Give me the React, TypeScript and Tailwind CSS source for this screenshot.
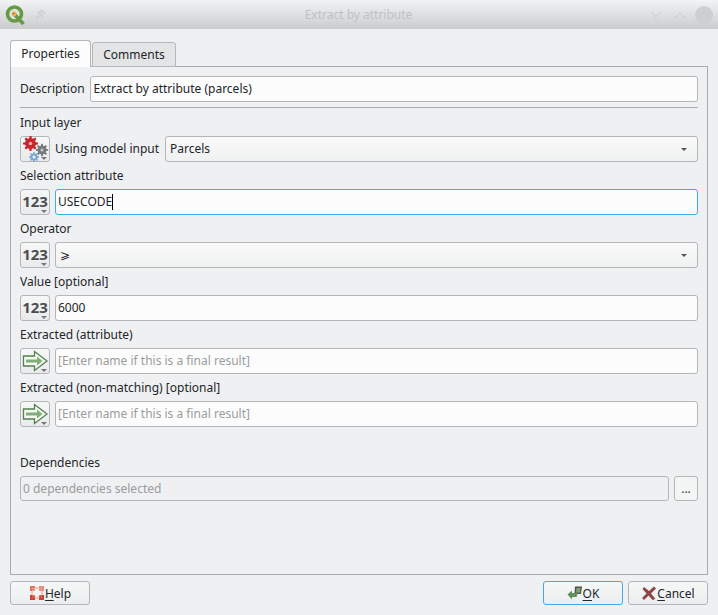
import React from 'react';

const font = "font-['Noto_Sans',sans-serif]";

const DropMark = () => (
  <span className="absolute right-[2px] bottom-[1px] w-0 h-0 border-x-[3px] border-x-transparent border-t-[3px] border-t-[#777]" />
);

const NumberIcon = () => (
  <span className="-mt-[2px] text-[15px] font-bold text-[#4d4d4d] leading-none lining-nums">123</span>
);

const ArrowIcon = () => (
  <svg width="28" height="22" viewBox="0 0 28 22">
    <path d="M2.5 6H13.5V1.5L26 11L13.5 20.5V16H2.5Z" fill="#f6f8f2" stroke="#54804f" strokeWidth="1.3" />
    <path d="M5 9.5H16V6.5L21.5 11L16 15.5V12.5H5Z" fill="#7fae78" />
  </svg>
);

// square-ish teeth, four points per tooth
const gearPath = (cx: number, cy: number, r: number, teeth: number) => {
  let d = '';
  const step = (Math.PI * 2) / teeth;
  for (let i = 0; i < teeth; i++) {
    const a = i * step;
    const pts: [number, number][] = [
      [r * 0.72, a - step * 0.32],
      [r, a - step * 0.16],
      [r, a + step * 0.16],
      [r * 0.72, a + step * 0.32],
    ];
    pts.forEach(([rad, t], j) => {
      d += `${i === 0 && j === 0 ? 'M' : 'L'}${(cx + rad * Math.cos(t)).toFixed(2)} ${(cy + rad * Math.sin(t)).toFixed(2)}`;
    });
  }
  return d + 'Z';
};

const ModelIcon = () => (
  <svg width="28" height="26" viewBox="0 0 28 26">
    <path d={gearPath(9.5, 7.5, 7.5, 8)} fill="#c9252d" />
    <circle cx="9.5" cy="7.5" r="1.8" fill="#e9a9a9" />
    <path d={gearPath(21, 14, 6.2, 8)} fill="#74797c" />
    <circle cx="21" cy="14" r="1.5" fill="#c9cbcc" />
    <path d={gearPath(13, 21, 5, 8)} fill="#7aa7d2" />
    <circle cx="13" cy="21" r="1.5" fill="#eef4fa" />
  </svg>
);

const QgisLogo = () => (
  <svg width="22" height="24" viewBox="0 0 22 24">
    <circle cx="10.5" cy="11" r="7" fill="#dfe3d8" stroke="#659a48" strokeWidth="3.6" />
    <path d="M11 12L19.5 21" stroke="#659a48" strokeWidth="3.6" />
    <circle cx="10" cy="11" r="2.4" fill="#e6b451" />
    <circle cx="9.5" cy="10.5" r="1.1" fill="#d8654f" />
  </svg>
);

const ToolButton = ({ children }: { children: React.ReactNode }) => (
  <div className="relative w-[30px] h-[26px] shrink-0 flex items-center justify-center rounded-[3px] border border-[#b4b6b8] bg-gradient-to-b from-[#f6f7f7] to-[#e9eaeb]">
    {children}
    <DropMark />
  </div>
);

const TextBox = ({ value, placeholder, focused, pad = 'px-[2px]' }: { value?: string; placeholder?: string; focused?: boolean; pad?: string }) => (
  <div
    className={`flex-1 h-[26px] flex items-center rounded-[3px] border bg-[#fcfcfc] ${pad} ${
      focused ? 'border-[#3daee9]' : 'border-[#b4b6b8]'
    }`}
  >
    {value !== undefined && <span className="text-[#232629]">{value}</span>}
    {focused && <span className="w-px h-[16px] bg-black" />}
    {placeholder && <span className="text-[#9a9c9e]">{placeholder}</span>}
  </div>
);

const SelectBox = ({ value, className }: { value: string; className: string }) => (
  <div className={`h-[26px] pl-[4px] pr-[10px] flex items-center justify-between rounded-[3px] border border-[#b4b6b8] bg-gradient-to-b from-[#f9f9f9] to-[#f0f1f1] ${className}`}>
    <span className="text-[#232629]">{value}</span>
    <span className="w-0 h-0 border-x-[3px] border-x-transparent border-t-[3px] border-t-[#555]" />
  </div>
);

const Field = ({ label, children }: { label: string; children: React.ReactNode }) => (
  <div className="flex flex-col">
    <div className="h-[27px] flex items-center text-[#232629]">{label}</div>
    <div className="flex items-center gap-[5px]">{children}</div>
  </div>
);

const HelpIcon = () => (
  <svg width="16" height="16" viewBox="0 0 16 16">
    <rect x="3" y="3" width="10" height="10" fill="none" stroke="#efc9bf" strokeWidth="2" />
    <path d="M1 6V1H6V3H3V6Z" fill="#e0766a" />
    <path d="M10 1H15V6H13V3H10Z" fill="#e8907f" />
    <path d="M1 10H3V13H6V15H1Z" fill="#cf4238" />
    <path d="M13 10H15V15H10V13H13Z" fill="#cf4238" />
    <circle cx="4.5" cy="4.5" r="1.6" fill="#e58a7c" />
    <circle cx="11.5" cy="4.5" r="1.6" fill="#e58a7c" />
    <circle cx="4.5" cy="11.5" r="1.6" fill="#d5483d" />
    <circle cx="11.5" cy="11.5" r="1.6" fill="#d5483d" />
  </svg>
);

const OkIcon = () => (
  <svg width="16" height="16" viewBox="0 0 16 16">
    <path d="M8 1.5H15L14 9H7.5Z" fill="#4c5a4c" />
    <path d="M9.5 3H13.5L13 7.5H9Z" fill="#7da276" />
    <path d="M0.5 9.5L5 5.5V8H11L9.5 12H5V14.5Z" fill="#5f9059" />
  </svg>
);

const CancelIcon = () => (
  <svg width="16" height="16" viewBox="0 0 16 16">
    <path d="M3 2L8 6L13 1.5L15 3.5L10 8.5L14.5 14L11.5 15L7.5 10.5L3 15L1 13L5.5 8.5L1.5 4Z" fill="#8c4744" />
  </svg>
);

const FooterButton = ({ icon, mnemonic, rest, focused }: { icon: React.ReactNode; mnemonic: string; rest: string; focused?: boolean }) => (
  <div
    className={`w-[80px] h-[24px] flex items-center justify-center rounded-[3px] border bg-gradient-to-b from-[#f6f7f7] to-[#ecedee] text-[#232629] ${
      focused ? 'border-[#3daee9]' : 'border-[#b4b6b8]'
    }`}
  >
    {icon}
    <span className="mt-px underline underline-offset-2">{mnemonic}</span>
    <span className="mt-px">{rest}</span>
  </div>
);

export default function App() {
  return (
    <div className={`w-[718px] h-[615px] flex flex-col bg-[#eff0f1] text-[12px] overflow-hidden ${font}`}>
      {/* title bar */}
      <div className="h-[29px] shrink-0 pl-[4px] pr-[5px] flex items-center bg-gradient-to-b from-[#f1f3f5] to-[#cbcccd]">
        <QgisLogo />
        <svg width="14" height="14" viewBox="0 0 14 14" className="ml-[7px]">
          <path d="M3 11L6 7.5M5 4L10 9M8 2L12 6M6 5L9 2.5" stroke="#cfd1d3" strokeWidth="2" fill="none" />
        </svg>
        <div className="flex-1 text-center text-[#bfc1c3] pl-[20px]">Extract by attribute</div>
        <svg width="12" height="8" viewBox="0 0 12 8" className="mr-[12px]">
          <path d="M1 1L6 6L11 1" stroke="#c6c8ca" fill="none" />
        </svg>
        <svg width="12" height="8" viewBox="0 0 12 8" className="mr-[9px]">
          <path d="M1 7L6 2L11 7" stroke="#c6c8ca" fill="none" />
        </svg>
        <div className="w-[18px] h-[18px] rounded-full bg-[#cdd0d2]" />
      </div>

      <div className="flex-1 px-[10px] pt-[11px] flex flex-col">
        {/* tabs */}
        <div className="flex items-end h-[27px] relative z-10 -mb-px">
          <div className="w-[81px] h-[27px] flex items-center justify-center rounded-t-[3px] border border-b-0 border-[#b4b6b8] bg-[#fcfcfc] text-[#232629]">
            Properties
          </div>
          <div className="w-[84px] h-[25px] ml-px flex items-center justify-center rounded-t-[3px] border border-[#b4b6b8] bg-[#e3e4e5] text-[#232629]">
            Comments
          </div>
        </div>

        {/* panel */}
        <div className="h-[509px] border border-[#a9abad] px-[9px] pt-[9px] flex flex-col">
          <div className="flex items-center gap-[5px]">
            <span className="text-[#232629]">Description</span>
            <TextBox value="Extract by attribute (parcels)" pad="px-[3px]" />
          </div>
          <div className="h-px bg-[#a9abad] mt-[5px] mb-[1px]" />

          <Field label="Input layer">
            <ToolButton>
              <ModelIcon />
            </ToolButton>
            <span className="text-[#232629]">Using model input</span>
            <SelectBox value="Parcels" className="flex-1 ml-px" />
          </Field>
          <Field label="Selection attribute">
            <ToolButton>
              <NumberIcon />
            </ToolButton>
            <TextBox value="USECODE" focused />
          </Field>
          <Field label="Operator">
            <ToolButton>
              <NumberIcon />
            </ToolButton>
            <SelectBox value="⩾" className="flex-1" />
          </Field>
          <Field label="Value [optional]">
            <ToolButton>
              <NumberIcon />
            </ToolButton>
            <TextBox value="6000" />
          </Field>
          <Field label="Extracted (attribute)">
            <ToolButton>
              <ArrowIcon />
            </ToolButton>
            <TextBox placeholder="[Enter name if this is a final result]" />
          </Field>
          <Field label="Extracted (non-matching) [optional]">
            <ToolButton>
              <ArrowIcon />
            </ToolButton>
            <TextBox placeholder="[Enter name if this is a final result]" />
          </Field>

          <div className="mt-[22px]">
            <Field label="Dependencies">
              <div className="flex-1 h-[25px] px-[2px] flex items-center rounded-[3px] border border-[#b4b6b8] bg-[#eff0f1] text-[#9a9c9e]">
                0 dependencies selected
              </div>
              <div className="w-[24px] h-[25px] flex items-center justify-center rounded-[3px] border border-[#b4b6b8] bg-[#f3f4f4] text-[#333]">
                ...
              </div>
            </Field>
          </div>
        </div>

        {/* footer */}
        <div className="mt-[6px] flex items-center justify-between">
          <FooterButton icon={<HelpIcon />} mnemonic="H" rest="elp" />
          <div className="flex gap-[5px]">
            <FooterButton icon={<OkIcon />} mnemonic="O" rest="K" focused />
            <FooterButton icon={<CancelIcon />} mnemonic="C" rest="ancel" />
          </div>
        </div>
      </div>
    </div>
  );
}
